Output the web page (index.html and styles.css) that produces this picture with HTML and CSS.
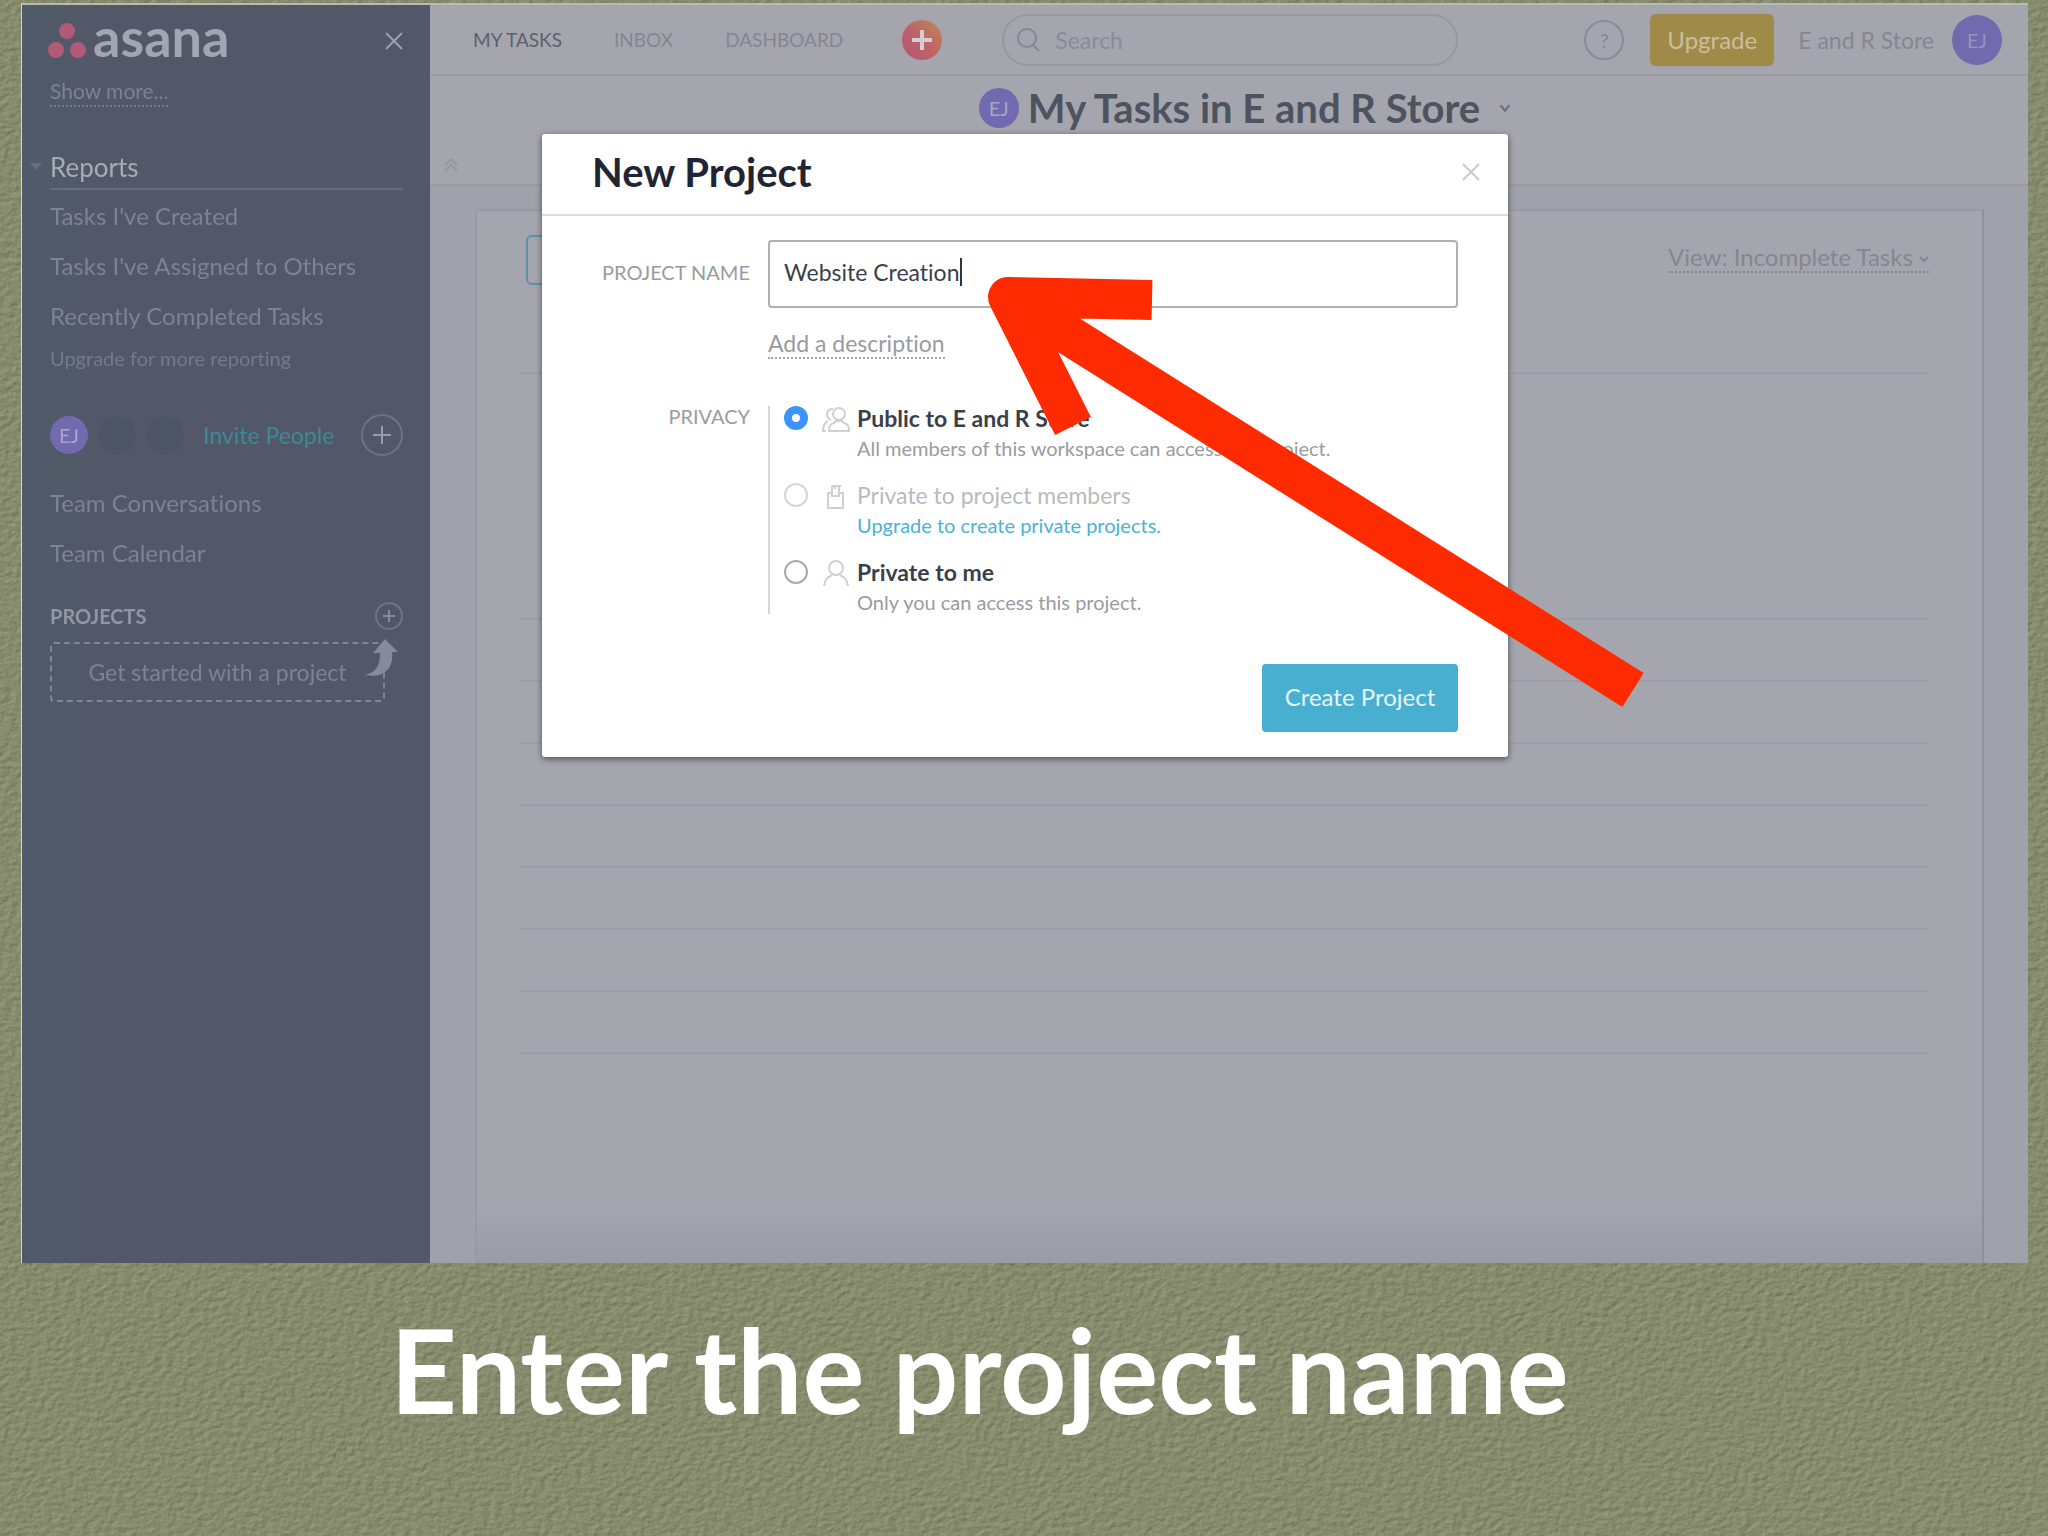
FILE: index.html
```html
<!DOCTYPE html>
<html lang="en">
<head>
    <meta charset="UTF-8">
    <meta name="viewport" content="width=device-width, initial-scale=1.0">
    <title>Enter the project name</title>
    <link rel="stylesheet" href="styles.css">
</head>
<body>
    <!-- Paper texture -->
    <svg class="paper" aria-hidden="true">
        <filter id="grain" x="0" y="0" width="100%" height="100%" color-interpolation-filters="sRGB">
            <feTurbulence type="fractalNoise" baseFrequency="0.14 0.2" numOctaves="3" seed="4" result="noise"/>
            <feDiffuseLighting in="noise" surfaceScale="0.7" diffuseConstant="1.15" lighting-color="#8a8f70">
                <feDistantLight azimuth="225" elevation="58"/>
            </feDiffuseLighting>
        </filter>
        <rect width="100%" height="100%" filter="url(#grain)"/>
    </svg>

    <div class="slide">
        <div class="screen">
            <aside class="sidebar">
                <div class="brand">
                    <svg class="brand-mark" viewBox="0 0 40 36" aria-hidden="true">
                        <circle cx="20" cy="8" r="8"/>
                        <circle cx="9" cy="27" r="8"/>
                        <circle cx="31" cy="27" r="8"/>
                    </svg>
                    <span class="brand-name">asana</span>
                    <button class="icon-button brand-close" aria-label="Close sidebar">
                        <svg width="18" height="18" viewBox="0 0 18 18"><path d="M1 1l16 16M17 1L1 17"/></svg>
                    </button>
                </div>
                <a href="#" class="show-more">Show more...</a>

                <h2 class="section-title">
                    <svg class="triangle" width="12" height="7" viewBox="0 0 12 7" aria-hidden="true"><path d="M0 0h12L6 7z"/></svg>
                    Reports
                </h2>
                <a href="#" class="side-link">Tasks I've Created</a>
                <a href="#" class="side-link">Tasks I've Assigned to Others</a>
                <a href="#" class="side-link">Recently Completed Tasks</a>
                <a href="#" class="side-note">Upgrade for more reporting</a>

                <div class="people">
                    <span class="avatar small">EJ</span>
                    <span class="avatar small empty"></span>
                    <span class="avatar small empty"></span>
                    <a href="#" class="invite">Invite People</a>
                    <button class="round-add" aria-label="Add person">
                        <svg width="18" height="18" viewBox="0 0 18 18"><path d="M9 0v18M0 9h18"/></svg>
                    </button>
                </div>
                <a href="#" class="side-link">Team Conversations</a>
                <a href="#" class="side-link">Team Calendar</a>

                <div class="projects-head">
                    <h3>PROJECTS</h3>
                    <button class="round-add mini" aria-label="Add project">
                        <svg width="12" height="12" viewBox="0 0 12 12"><path d="M6 0v12M0 6h12"/></svg>
                    </button>
                </div>
                <div class="get-started">
                    Get started with a project
                    <svg class="hint-arrow" width="34" height="38" viewBox="0 0 34 38" aria-hidden="true">
                        <path d="M0 36C11 33 15 27 15 14H8L20 0l13 13h-6c2 16-8 27-27 23z"/>
                    </svg>
                </div>
            </aside>

            <main class="main">
                <header class="topbar">
                    <nav class="tabs">
                        <a href="#" class="active">MY TASKS</a>
                        <a href="#">INBOX</a>
                        <a href="#">DASHBOARD</a>
                    </nav>
                    <button class="quick-add" aria-label="Quick add">
                        <svg width="20" height="20" viewBox="0 0 20 20"><path d="M10 0v20M0 10h20"/></svg>
                    </button>
                    <label class="search">
                        <svg width="24" height="24" viewBox="0 0 24 24" aria-hidden="true"><circle cx="10" cy="10" r="9"/><path d="M16 17l6 6"/></svg>
                        <input type="text" placeholder="Search" aria-label="Search">
                    </label>
                    <div class="account">
                        <button class="help" aria-label="Help">?</button>
                        <button class="upgrade">Upgrade</button>
                        <span class="workspace">E and R Store</span>
                        <span class="avatar large">EJ</span>
                    </div>
                </header>

                <div class="page-head">
                    <button class="icon-button collapse" aria-label="Collapse header">
                        <svg width="14" height="14" viewBox="0 0 14 14"><path d="M1 7l6-6 6 6M1 13l6-6 6 6"/></svg>
                    </button>
                    <div class="page-title">
                        <span class="avatar">EJ</span>
                        <h1>My Tasks in E and R Store</h1>
                        <svg width="12" height="9" viewBox="0 0 10 8" aria-hidden="true"><path d="M1 1l4 5 4-5"/></svg>
                    </div>
                </div>

                <div class="board">
                    <section class="card">
                        <div class="card-tools">
                            <button class="add-task" aria-label="Add task"></button>
                            <button class="view">View: Incomplete Tasks
                                <svg width="10" height="7" viewBox="0 0 10 7" aria-hidden="true"><path d="M1 1l4 4 4-4"/></svg>
                            </button>
                        </div>
                        <ul class="rows">
                            <li class="tall"></li>
                            <li></li>
                            <li></li>
                            <li></li>
                            <li></li>
                            <li></li>
                            <li></li>
                            <li></li>
                        </ul>
                    </section>
                </div>
            </main>

            <!-- New project dialog -->
            <div class="overlay">
                <form class="dialog" role="dialog" aria-labelledby="dialog-title">
                    <div class="dialog-head">
                        <h2 id="dialog-title">New Project</h2>
                        <button type="button" class="icon-button" aria-label="Close">
                            <svg width="18" height="18" viewBox="0 0 18 18"><path d="M1 1l16 16M17 1L1 17"/></svg>
                        </button>
                    </div>
                    <div class="dialog-body">
                        <label class="field-label name-label" for="project-name">PROJECT NAME</label>
                        <div class="name-field">
                            <input type="text" id="project-name" value="Website Creation">
                            <span class="caret"></span>
                        </div>

                        <a href="#" class="add-description">Add a description</a>

                        <span class="field-label" id="privacy-label">PRIVACY</span>
                        <div class="privacy" role="radiogroup" aria-labelledby="privacy-label">
                            <div class="choice">
                                <input type="radio" name="privacy" id="public" checked>
                                <svg width="30" height="26" viewBox="0 0 30 26" aria-hidden="true">
                                    <circle cx="18" cy="8" r="6"/>
                                    <path d="M8 25c0-5 1-7 5-8l2-2h6l2 2c4 1 5 3 5 8zM10 14c-5-2-6-11 2-11M7 15c-4 2-5 5-5 10h3"/>
                                </svg>
                                <div>
                                    <label for="public">Public to E and R Store</label>
                                    <p>All members of this workspace can access this project.</p>
                                </div>
                            </div>
                            <div class="choice disabled">
                                <input type="radio" name="privacy" id="members" disabled>
                                <svg width="30" height="26" viewBox="0 0 30 26" aria-hidden="true">
                                    <path d="M11 10H7v15h15V10h-4v3h-7V3M11 3h3v3M14 3h6M18 4v6"/>
                                </svg>
                                <div>
                                    <label for="members">Private to project members</label>
                                    <p><a href="#">Upgrade to create private projects.</a></p>
                                </div>
                            </div>
                            <div class="choice">
                                <input type="radio" name="privacy" id="me">
                                <svg width="30" height="26" viewBox="0 0 30 26" aria-hidden="true">
                                    <circle cx="15" cy="8" r="7"/>
                                    <path d="M3 26c1-7 4-9 8-11M27 26c-1-7-4-9-8-11"/>
                                </svg>
                                <div>
                                    <label for="me">Private to me</label>
                                    <p>Only you can access this project.</p>
                                </div>
                            </div>
                        </div>

                        <button type="button" class="create">Create Project</button>
                    </div>
                    <svg class="pointer" width="660" height="440" viewBox="0 0 660 440" aria-hidden="true">
                        <path d="M172 28L28 25l65 129M28 25l625 393"/>
                    </svg>
                </form>
            </div>
        </div>

        <p class="caption">Enter the project name</p>
    </div>
</body>
</html>
```
FILE: styles.css
```css
* {
    box-sizing: border-box;
}
body {
    margin: 0;
    font-family: Lato, "Liberation Sans", sans-serif;
    font-size: 20px;
    font-variant-ligatures: none;
    background-color: #868b6c;
}
h1, h2, h3, p, ul {
    margin: 0;
    padding: 0;
}
a {
    color: inherit;
    text-decoration: none;
}
button, input {
    font: inherit;
    font-variant-ligatures: none;
    color: inherit;
    margin: 0;
}
button {
    padding: 0;
    border: none;
    background: none;
    cursor: pointer;
}
svg {
    flex: none;
    fill: none;
    stroke: currentColor;
    stroke-width: 2;
}
.paper {
    position: fixed;
    top: 0;
    left: 0;
    width: 100%;
    height: 100%;
    z-index: -1;
    stroke: none;
}
.slide {
    display: flex;
    flex-direction: column;
    min-height: 100vh;
    padding: 3px 20px 0 21px;
}
.screen {
    position: relative;
    flex: 1;
    display: grid;
    grid-template-columns: 408px 1fr;
    border-top: 2px solid #b9bab5;
    border-left: 1px solid #d5d6d3;
}
.caption {
    padding: 28px 90px 87px 0;
    font-size: 116px;
    line-height: 158px;
    font-weight: 700;
    text-align: center;
    color: #fff;
}

/* Sidebar */
.sidebar {
    display: flex;
    flex-direction: column;
    padding: 0 27px 0 28px;
    background: linear-gradient(to right, #4f5b68, #525868 15%, #525869);
    color: #7d8391;
}
.brand {
    display: flex;
    align-items: center;
    height: 72px;
    margin-left: -3px;
}
.brand-mark {
    width: 40px;
    height: 36px;
    fill: #b05a78;
    stroke: none;
}
.brand-name {
    margin-left: 6px;
    font-size: 54px;
    line-height: 60px;
    font-weight: 700;
    color: #a0a6b2;
    padding-bottom: 8px;
}
.icon-button {
    display: flex;
    color: #c9cacd;
}
.brand-close {
    margin-left: auto;
    color: #9ba1ad;
}
.show-more {
    align-self: flex-start;
    font-size: 21px;
    line-height: 28px;
    border-bottom: 2px dotted #777e8c;
}
.section-title {
    position: relative;
    margin-top: 42px;
    padding-bottom: 3px;
    border-bottom: 2px solid #666d7c;
    margin-bottom: 1px;
    font-size: 26px;
    line-height: 36px;
    font-weight: 400;
    color: #a6abb6;
}
.triangle {
    position: absolute;
    left: -20px;
    top: 14px;
    fill: #666d7c;
    stroke: none;
}
.side-link {
    font-size: 24px;
    line-height: 50px;
}
.side-note {
    font-size: 20px;
    line-height: 34px;
    color: #737a89;
}
.people {
    display: flex;
    align-items: center;
    gap: 10px;
    margin: 39px 0 22px;
}
.avatar {
    display: flex;
    align-items: center;
    justify-content: center;
    flex: none;
    width: 40px;
    height: 40px;
    border-radius: 50%;
    background-color: #716aae;
    color: #a9a7c4;
    font-size: 20px;
}
.avatar.small {
    width: 38px;
    height: 38px;
}
.avatar.large {
    width: 50px;
    height: 50px;
    color: #9693c0;
}
.avatar.empty {
    background-color: #4d5464;
}
.invite {
    margin-left: 9px;
    font-size: 23px;
    color: #3a8c98;
}
.round-add {
    display: flex;
    align-items: center;
    justify-content: center;
    width: 42px;
    height: 42px;
    margin-left: auto;
    border: 2px solid #6d7482;
    border-radius: 50%;
    color: #979da9;
}
.round-add.mini {
    width: 28px;
    height: 28px;
    color: #858b98;
}
.projects-head {
    display: flex;
    align-items: center;
    margin-top: 24px;
}
.projects-head h3 {
    font-size: 20px;
    line-height: 24px;
    color: #9096a3;
}
.get-started {
    position: relative;
    margin: 12px 18px 0 0;
    border: 2px dashed #7f8593;
    border-radius: 4px;
    font-size: 23px;
    line-height: 56px;
    text-align: center;
}
.hint-arrow {
    position: absolute;
    top: -5px;
    right: -16px;
    fill: #858b98;
    stroke: none;
}

/* Main area */
.main {
    display: flex;
    flex-direction: column;
    background-color: #a5a5ae;
    color: #858690;
}
.topbar {
    display: flex;
    align-items: center;
    height: 71px;
    padding: 0 26px 0 43px;
    border-bottom: 2px solid #999aa2;
}
.tabs {
    display: flex;
    gap: 52px;
    font-size: 19px;
}
.tabs .active {
    color: #5d606c;
}
.quick-add {
    display: flex;
    align-items: center;
    justify-content: center;
    width: 40px;
    height: 40px;
    margin: 0 60px 0 59px;
    border-radius: 50%;
    background: linear-gradient(to top right, #b35577, #bd6468 50%, #c08a55);
    color: #d5cdd0;
}
.quick-add svg {
    stroke-width: 4;
}
.search {
    display: flex;
    align-items: center;
    gap: 14px;
    flex: 0 1 456px;
    height: 52px;
    padding: 0 13px;
    border: 2px solid #96979f;
    border-radius: 26px;
}
.search input {
    flex: 1;
    min-width: 0;
    padding: 0;
    border: none;
    background: none;
    font-size: 23px;
}
.search input::placeholder {
    color: #8b8c95;
}
.account {
    display: flex;
    align-items: center;
    margin-left: auto;
}
.help {
    width: 40px;
    height: 40px;
    margin-right: 26px;
    border: 2px solid #8b8c95;
    border-radius: 50%;
}
.upgrade {
    width: 124px;
    height: 52px;
    margin-right: 24px;
    border-radius: 6px;
    background-color: #a08a48;
    color: #c9bf9d;
    font-size: 24px;
}
.workspace {
    margin-right: 18px;
    font-size: 23px;
}
.page-head {
    display: flex;
    align-items: flex-start;
    height: 110px;
    border-bottom: 2px solid #999aa2;
}
.collapse {
    width: 32px;
    padding-left: 14px;
    align-self: flex-end;
    padding-bottom: 12px;
    color: #94959d;
}
.page-title {
    display: flex;
    flex: 1;
    align-items: center;
    justify-content: center;
    gap: 9px;
    color: #6d707b;
}
.page-title h1 {
    font-size: 40px;
    line-height: 64px;
    margin-right: 10px;
    color: #4d5460;
}
.board {
    flex: 1;
    display: flex;
    padding: 23px 44px 0 45px;
    background-color: #9fa2ab;
}
.card {
    flex: 1;
    padding: 24px 53px 0 42px;
    border: 2px solid #999aa3;
    border-bottom: none;
    border-right-color: #8f9099;
    background: linear-gradient(to top, #9b9ba6, #a5a5ae 60px);
}
.card-tools {
    display: flex;
    align-items: flex-start;
    justify-content: space-between;
    height: 139px;
    padding-left: 7px;
    border-bottom: 2px solid #9c9ca6;
}
.add-task {
    width: 120px;
    height: 50px;
    border: 2px solid #5c93a4;
    border-radius: 6px;
}
.view {
    margin-top: 8px;
    font-size: 24px;
    line-height: 28px;
    border-bottom: 2px dotted #84858f;
}
.view svg {
    vertical-align: middle;
}
.rows {
    list-style: none;
}
.rows li {
    height: 62px;
    border-bottom: 2px solid #9c9ca6;
}
.rows .tall {
    height: 246px;
}

/* Dialog */
.overlay {
    position: absolute;
    top: 0;
    left: 0;
    width: 100%;
    height: 100%;
    display: flex;
    align-items: flex-start;
    justify-content: center;
    padding-top: 129px;
}
.dialog {
    position: relative;
    width: 966px;
    border-radius: 3px;
    background-color: #fff;
    box-shadow: 0 2px 6px rgba(40, 42, 50, 0.7);
    color: #9a9b9f;
}
.dialog-head {
    display: flex;
    align-items: center;
    justify-content: space-between;
    height: 82px;
    padding: 0 28px 4px 50px;
    border-bottom: 2px solid #dcdde0;
}
.dialog-head h2 {
    font-size: 40px;
    line-height: 48px;
    font-weight: 700;
    color: #1f2532;
}
.dialog-body {
    display: grid;
    grid-template-columns: 208px 1fr;
    column-gap: 18px;
    padding: 24px 50px 25px 0;
}
.field-label {
    text-align: right;
    font-size: 20px;
    line-height: 20px;
}
.name-label {
    align-self: center;
    padding-bottom: 4px;
}
.name-field {
    display: flex;
    align-items: center;
    height: 68px;
    padding: 0 14px 4px;
    border: 2px solid #b0b1b4;
    border-radius: 4px;
    color: #3a3f4b;
}
.name-field input {
    field-sizing: content;
    padding: 0;
    border: none;
    outline: none;
    background: none;
    font-size: 23px;
}
.caret {
    width: 2px;
    height: 28px;
    background-color: #30343f;
}
.add-description {
    grid-column: 2;
    justify-self: start;
    margin: 21px 0 47px;
    font-size: 23px;
    line-height: 28px;
    border-bottom: 2px dotted #a3a4a8;
}
.privacy {
    display: grid;
    gap: 23px;
    padding-left: 14px;
    border-left: 2px solid #d5d6d9;
}
.choice {
    display: flex;
    align-items: flex-start;
    height: 54px;
}
.choice svg {
    margin: 0 6px 0 13px;
    color: #cfd0d3;
}
.choice input {
    appearance: none;
    flex: none;
    width: 24px;
    height: 24px;
    border: 2px solid #a9aaae;
    border-radius: 50%;
}
.choice input:checked {
    border: 8px solid #3b93fb;
}
.choice label {
    display: block;
    font-size: 23px;
    line-height: 24px;
    font-weight: 700;
    color: #3a3f4b;
}
.choice p {
    margin-top: 4px;
    font-size: 20px;
    line-height: 28px;
}
.choice a {
    color: #4ab3d4;
}
.choice.disabled input {
    border-color: #d5d6d9;
}
.choice.disabled label {
    font-weight: 400;
    color: #b9babd;
}
.create {
    grid-column: 2;
    justify-self: end;
    width: 196px;
    height: 68px;
    margin-top: 50px;
    padding-bottom: 4px;
    border-radius: 4px;
    background-color: #49afd0;
    color: #e6f6fb;
    font-size: 24px;
}
/* Red arrow that lies over the dialog and points at the name field */
.pointer {
    position: absolute;
    top: 138px;
    left: 438px;
    overflow: visible;
    color: #ff2b00;
    stroke-width: 40;
    stroke-linejoin: round;
    pointer-events: none;
}
```
